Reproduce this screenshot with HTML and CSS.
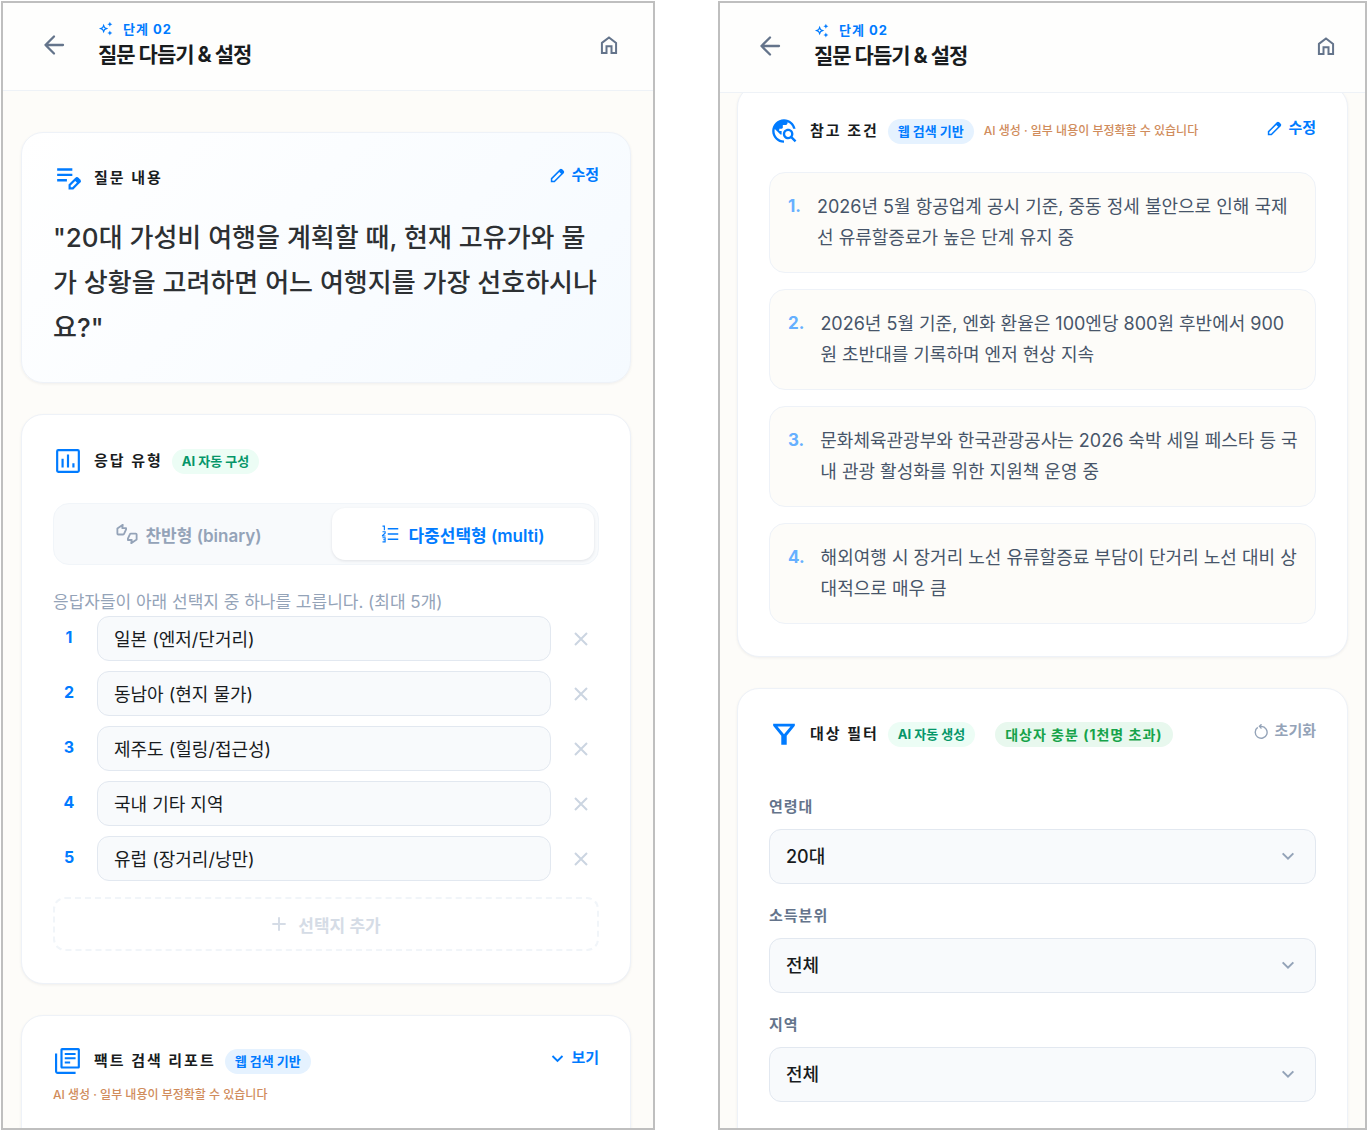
FILE: index.html
```html
<!DOCTYPE html>
<html lang="ko">
<head>
    <meta charset="UTF-8">
    <meta name="viewport" content="width=device-width, initial-scale=1.0">
    <title>질문 다듬기 &amp; 설정</title>
    <link rel="stylesheet" href="styles.css">
</head>
<body>
    <!-- Shared icons -->
    <svg class="sprite" aria-hidden="true">
        <symbol id="i-back" viewBox="0 0 24 24"><path d="M21 12H3.5M12 3.5 3.5 12l8.5 8.5" fill="none" stroke="currentColor" stroke-width="2.3" stroke-linecap="round" stroke-linejoin="round"/></symbol>
        <symbol id="i-home" viewBox="0 0 24 24"><path d="M3.5 9.5 12 3l8.5 6.5v12H15v-8H9v8H3.5z" fill="none" stroke="currentColor" stroke-width="2.4"/></symbol>
        <symbol id="i-spark" viewBox="0 0 24 24"><path fill-rule="evenodd" d="M9 4.500 11.200 9.800 16.500 12l-5.300 2.200L9 19.500l-2.200-5.300L1.500 12l5.300-2.200zM9 9.400l-.8 1.800-1.800.8 1.800.8.8 1.800.8-1.800 1.800-.8-1.800-.8zM19 1l1.200 2.800L23 5l-2.800 1.200L19 9l-1.200-2.800L15 5l2.800-1.200zM19 15l1.200 2.800L23 19l-2.800 1.200L19 23l-1.200-2.800L15 19l2.800-1.200z"/></symbol>
        <symbol id="i-note" viewBox="0 0 24 24"><path d="M2 3h14v2.200H2zM2 8h14v2.200H2zM2 13h9v2.200H2z"/><path d="M13.500 21.500v-3l6-6a1 1 0 0 1 1.500 0l1.500 1.500a1 1 0 0 1 0 1.500l-6 6z" fill="none" stroke="currentColor" stroke-width="2"/><path d="m17.500 13.500 2.500-2 4 4-2.500 2z"/></symbol>
        <symbol id="i-edit" viewBox="0 0 24 24"><path d="M2.500 21.500V17L16.500 3a1.500 1.500 0 0 1 2.100 0L21 5.400a1.500 1.500 0 0 1 0 2.100L7 21.500z" fill="none" stroke="currentColor" stroke-width="2.4"/><path d="m14 5.500 3-3h2l3 3v2l-3 3z"/></symbol>
        <symbol id="i-chart" viewBox="0 0 24 24"><path d="M6 10h2v8H6zM11 6h2v12h-2zM16 14h2v4h-2z"/><rect x="2" y="2" width="20" height="20" rx="1" fill="none" stroke="currentColor" stroke-width="2"/></symbol>
        <symbol id="i-thumbs" viewBox="0 0 24 24"><path d="M1.500 6v5.500a1 1 0 0 0 1 1h5.200c.6 0 1-.3 1.200-.8L11 7V5.500H6.800l.6-3.500L1.500 6zM22.500 18v-5.500a1 1 0 0 0-1-1h-5.200c-.6 0-1 .3-1.200.8L13 17v1.500h4.200l-.6 3.500 5.900-4z" fill="none" stroke="currentColor" stroke-width="2" stroke-linejoin="round"/></symbol>
        <symbol id="i-list" viewBox="0 0 24 24"><path d="M9 4h14v2H9zM9 11h14v2H9zM9 18h14v2H9z"/><path d="M2 1.500h2.500V7M2 9h3.500v2L2 14v.7h4M2 17h3.500v5.500H2M3 19.700h2.500" fill="none" stroke="currentColor" stroke-width="1.5"/></symbol>
        <symbol id="i-books" viewBox="0 0 24 24"><path d="M2 5H0v16.500C0 22.900 1.100 24 2.500 24H19v-2H2V5zm19.500-5h-15C5.700 0 5 .7 5 1.500v16c0 .8.700 1.500 1.500 1.500h15c.8 0 1.500-.7 1.500-1.500v-16C23 .7 22.300 0 21.500 0zM21 17H7V2h14v15zM9 8.500h10v1.900H9zm0 4h5v1.900H9zm0-8h10v1.900H9z"/></symbol>
        <symbol id="i-globe" viewBox="1 1 22 22"><path d="M19.300 16.900c.4-.7.7-1.500.7-2.400 0-2.500-2-4.500-4.500-4.500S11 12 11 14.500s2 4.500 4.500 4.500c.9 0 1.700-.3 2.400-.7l3.200 3.200 1.400-1.400-3.200-3.200zm-3.800.1c-1.400 0-2.500-1.100-2.500-2.500s1.100-2.500 2.500-2.500 2.500 1.100 2.500 2.500-1.100 2.500-2.500 2.500zM12 20v2C6.480 22 2 17.520 2 12S6.480 2 12 2c4.840 0 8.870 3.440 9.800 8h-2.070c-.64-2.460-2.400-4.470-4.730-5.410V5c0 1.100-.9 2-2 2h-2v2c0 .55-.45 1-1 1H8v2h2v3H9l-4.790-4.790C4.080 10.790 4 11.380 4 12c0 4.410 3.590 8 8 8z"/></symbol>
        <symbol id="i-filter" viewBox="0 0 24 24"><path fill-rule="evenodd" d="M2 2.500h20v1.800l-7.500 9.200V22h-5v-8.500L2 4.300zM6 5l6 7.300L18 5z"/></symbol>
        <symbol id="i-close" viewBox="0 0 24 24"><path d="m3 3 18 18M21 3 3 21" fill="none" stroke="currentColor" stroke-width="3"/></symbol>
        <symbol id="i-plus" viewBox="0 0 24 24"><path d="M12 2v20M2 12h20" fill="none" stroke="currentColor" stroke-width="3"/></symbol>
        <symbol id="i-down" viewBox="0 0 24 24"><path d="m4 8 8 8 8-8" fill="none" stroke="currentColor" stroke-width="3"/></symbol>
        <symbol id="i-reset" viewBox="0 0 24 24"><path d="M6 5.500A9.500 9.500 0 1 0 12 3.800H9M12 .5 8.700 3.800 12 7.200" fill="none" stroke="currentColor" stroke-width="2.2"/></symbol>
    </svg>

    <main class="screens">
        <!-- Screen 1: question and answer options -->
        <section class="phone">
            <header class="topbar">
                <button class="icon-btn" aria-label="뒤로"><svg class="icon icon-24"><use href="#i-back"/></svg></button>
                <div class="topbar-title">
                    <span class="step"><svg class="icon icon-15"><use href="#i-spark"/></svg>단계 02</span>
                    <h1>질문 다듬기 &amp; 설정</h1>
                </div>
                <button class="icon-btn" aria-label="홈"><svg class="icon icon-20"><use href="#i-home"/></svg></button>
            </header>

            <div class="content">
                <section class="card question-card">
                    <div class="card-head">
                        <h2><svg class="icon icon-26"><use href="#i-note"/></svg>질문 내용</h2>
                        <button class="link-btn"><svg class="icon icon-15"><use href="#i-edit"/></svg>수정</button>
                    </div>
                    <p class="question">"20대 가성비 여행을 계획할 때, 현재 고유가와 물가 상황을 고려하면 어느 여행지를 가장 선호하시나요?"</p>
                </section>

                <section class="card">
                    <div class="card-head type-head">
                        <h2><svg class="icon icon-26"><use href="#i-chart"/></svg>응답 유형</h2>
                        <span class="badge badge-mint">AI 자동 구성</span>
                    </div>
                    <div class="tabs">
                        <button class="tab"><svg class="icon icon-22"><use href="#i-thumbs"/></svg>찬반형 (binary)</button>
                        <button class="tab active"><svg class="icon icon-18"><use href="#i-list"/></svg>다중선택형 (multi)</button>
                    </div>
                    <p class="hint">응답자들이 아래 선택지 중 하나를 고릅니다. (최대 5개)</p>
                    <div class="options">
                        <div class="option">
                            <label for="opt1">1</label>
                            <input id="opt1" type="text" value="일본 (엔저/단거리)">
                            <button class="remove-btn" aria-label="삭제"><svg class="icon icon-16"><use href="#i-close"/></svg></button>
                        </div>
                        <div class="option">
                            <label for="opt2">2</label>
                            <input id="opt2" type="text" value="동남아 (현지 물가)">
                            <button class="remove-btn" aria-label="삭제"><svg class="icon icon-16"><use href="#i-close"/></svg></button>
                        </div>
                        <div class="option">
                            <label for="opt3">3</label>
                            <input id="opt3" type="text" value="제주도 (힐링/접근성)">
                            <button class="remove-btn" aria-label="삭제"><svg class="icon icon-16"><use href="#i-close"/></svg></button>
                        </div>
                        <div class="option">
                            <label for="opt4">4</label>
                            <input id="opt4" type="text" value="국내 기타 지역">
                            <button class="remove-btn" aria-label="삭제"><svg class="icon icon-16"><use href="#i-close"/></svg></button>
                        </div>
                        <div class="option">
                            <label for="opt5">5</label>
                            <input id="opt5" type="text" value="유럽 (장거리/낭만)">
                            <button class="remove-btn" aria-label="삭제"><svg class="icon icon-16"><use href="#i-close"/></svg></button>
                        </div>
                    </div>
                    <button class="add-btn"><svg class="icon icon-16"><use href="#i-plus"/></svg>선택지 추가</button>
                </section>

                <section class="card report-card">
                    <div class="card-head">
                        <h2><svg class="icon icon-26"><use href="#i-books"/></svg>팩트 검색 리포트</h2>
                        <span class="badge badge-blue">웹 검색 기반</span>
                        <button class="link-btn"><svg class="icon icon-15"><use href="#i-down"/></svg>보기</button>
                    </div>
                    <p class="notice">AI 생성 · 일부 내용이 부정확할 수 있습니다</p>
                </section>
            </div>
        </section>

        <!-- Screen 2: conditions and target filter -->
        <section class="phone phone-scrolled">
            <header class="topbar">
                <button class="icon-btn" aria-label="뒤로"><svg class="icon icon-24"><use href="#i-back"/></svg></button>
                <div class="topbar-title">
                    <span class="step"><svg class="icon icon-15"><use href="#i-spark"/></svg>단계 02</span>
                    <h1>질문 다듬기 &amp; 설정</h1>
                </div>
                <button class="icon-btn" aria-label="홈"><svg class="icon icon-20"><use href="#i-home"/></svg></button>
            </header>

            <div class="content">
                <section class="card">
                    <div class="card-head conditions-head">
                        <h2><svg class="icon icon-26"><use href="#i-globe"/></svg>참고 조건</h2>
                        <span class="badge badge-blue">웹 검색 기반</span>
                        <span class="notice">AI 생성 · 일부 내용이 부정확할 수 있습니다</span>
                        <button class="link-btn"><svg class="icon icon-15"><use href="#i-edit"/></svg>수정</button>
                    </div>
                    <ol class="conditions">
                        <li><span class="num">1.</span><p>2026년 5월 항공업계 공시 기준, 중동 정세 불안으로 인해 국제선 유류할증료가 높은 단계 유지 중</p></li>
                        <li><span class="num">2.</span><p>2026년 5월 기준, 엔화 환율은 100엔당 800원 후반에서 900원 초반대를 기록하며 엔저 현상 지속</p></li>
                        <li><span class="num">3.</span><p>문화체육관광부와 한국관광공사는 2026 숙박 세일 페스타 등 국내 관광 활성화를 위한 지원책 운영 중</p></li>
                        <li><span class="num">4.</span><p>해외여행 시 장거리 노선 유류할증료 부담이 단거리 노선 대비 상대적으로 매우 큼</p></li>
                    </ol>
                </section>

                <section class="card filter-card">
                    <div class="card-head">
                        <h2><svg class="icon icon-26"><use href="#i-filter"/></svg>대상 필터</h2>
                        <span class="badge badge-mint">AI 자동 생성</span>
                        <span class="badge badge-green">대상자 충분 (1천명 초과)</span>
                        <button class="link-btn muted"><svg class="icon icon-15"><use href="#i-reset"/></svg>초기화</button>
                    </div>
                    <div class="fields">
                        <div class="field">
                            <label for="age">연령대</label>
                            <div class="select">
                                <select id="age"><option>20대</option></select>
                                <svg class="icon icon-16"><use href="#i-down"/></svg>
                            </div>
                        </div>
                        <div class="field">
                            <label for="income">소득분위</label>
                            <div class="select">
                                <select id="income"><option>전체</option></select>
                                <svg class="icon icon-16"><use href="#i-down"/></svg>
                            </div>
                        </div>
                        <div class="field">
                            <label for="region">지역</label>
                            <div class="select">
                                <select id="region"><option>전체</option></select>
                                <svg class="icon icon-16"><use href="#i-down"/></svg>
                            </div>
                        </div>
                    </div>
                </section>
            </div>
        </section>
    </main>
</body>
</html>
```
FILE: styles.css
```css
/* General Styles */
* {
    box-sizing: border-box;
}

body {
    margin: 0;
    background-color: white;
    color: #191c1e;
    font-family: Inter, "Noto Sans CJK KR", sans-serif;
    font-size: 17px;
}

h1, h2, p, ol {
    margin: 0;
    padding: 0;
}

button, input, select {
    font-family: inherit;
    color: inherit;
}

button {
    display: flex;
    align-items: center;
    justify-content: center;
    border: none;
    background: none;
    padding: 0;
    cursor: pointer;
}

.sprite {
    display: none;
}

.icon {
    flex: none;
    fill: currentColor;
}

.icon-15 { width: 15px; height: 15px; }
.icon-16 { width: 16px; height: 16px; }
.icon-18 { width: 18px; height: 18px; }
.icon-20 { width: 20px; height: 20px; }
.icon-22 { width: 22px; height: 22px; }
.icon-24 { width: 24px; height: 24px; }
.icon-26 { width: 26px; height: 26px; }

/* Screens */
.screens {
    display: grid;
    grid-template-columns: 654fr 649fr;
    gap: 63px;
    height: 100vh;
    padding: 1px 0 1px 1px;
}

.phone {
    min-width: 0;
    border: 2px solid #bfbfbf;
    background-color: #fdfcf9;
    overflow: hidden;
}

/* Top bar */
.topbar {
    position: relative;
    z-index: 1;
    display: flex;
    align-items: center;
    height: 88px;
    padding: 0 34px 4px 39px;
    border-bottom: 1px solid #eef2f7;
    background-color: #fefefd;
}

.icon-btn {
    color: #64748b;
}

.topbar-title {
    flex: 1;
    margin-left: 32px;
}

.step {
    display: flex;
    align-items: center;
    gap: 10px;
    color: #007bff;
    font-size: 13px;
    font-weight: 700;
    line-height: 20px;
    letter-spacing: 1px;
}

h1 {
    font-size: 21px;
    font-weight: 700;
    line-height: 32px;
    letter-spacing: -1px;
}

/* Cards */
.content {
    display: flex;
    flex-direction: column;
    gap: 31px;
    padding: 41px 22px 0 18px;
}

.card {
    padding: 32px 31px;
    border: 1px solid #eef2f8;
    border-radius: 22px;
    background-color: white;
    box-shadow: 0 1px 3px rgba(15, 23, 42, 0.06);
}

.question-card {
    background: linear-gradient(135deg, white, #f5faff);
}

.card-head {
    display: flex;
    align-items: center;
    height: 26px;
}

h2 {
    display: flex;
    align-items: flex-start;
    gap: 13px;
    margin-left: 2px;
    font-size: 15px;
    font-weight: 700;
    line-height: 26px;
    letter-spacing: 2px;
}

h2 .icon {
    color: #007bff;
}

.badge {
    margin-left: 9px;
    padding: 0 10px;
    border-radius: 13px;
    font-size: 13px;
    font-weight: 700;
    line-height: 25px;
    white-space: nowrap;
}

.badge-mint {
    background-color: #ecfdf5;
    color: #059669;
}

.badge-blue {
    background-color: #e5f2ff;
    color: #007bff;
}

.badge-green {
    margin-left: 20px;
    background-color: #e8f8ee;
    color: #16a34a;
    font-size: 14px;
    letter-spacing: 1px;
}

.link-btn {
    align-self: flex-start;
    gap: 6px;
    margin-left: auto;
    color: #007bff;
    font-size: 15px;
    font-weight: 700;
    line-height: 20px;
}

.link-btn.muted {
    color: #94a3b8;
}

.notice {
    color: #d08c5c;
    font-size: 12px;
    font-weight: 500;
    line-height: 18px;
}

/* Question */
.question {
    margin-top: 24px;
    color: #2d3033;
    font-size: 26px;
    font-weight: 500;
    line-height: 45px;
}

/* Answer type */
.type-head {
    height: 28px;
}

.tabs {
    display: grid;
    grid-template-columns: 1fr 1fr;
    gap: 12px;
    margin-top: 28px;
    height: 62px;
    padding: 4px;
    border: 1px solid #f1f5f9;
    border-radius: 16px;
    background-color: #f8fafc;
}

.tab {
    gap: 7px;
    border-radius: 13px;
    color: #94a3b8;
    font-size: 17px;
    font-weight: 600;
}

.tab.active {
    gap: 9px;
    background-color: white;
    color: #007bff;
    box-shadow: 0 1px 3px rgba(15, 23, 42, 0.1);
}

.hint {
    margin-top: 24px;
    color: #94a3b8;
    font-size: 17px;
    line-height: 27px;
}

.options {
    display: grid;
    gap: 10px;
}

.option {
    display: flex;
    gap: 12px;
}

.option label {
    width: 32px;
    color: #007bff;
    font-size: 16px;
    font-weight: 700;
    line-height: 43px;
    text-align: center;
}

.option input {
    flex: 1;
    min-width: 0;
    height: 45px;
    padding: 0 16px 2px;
    border: 1px solid #e2e8f0;
    border-radius: 12px;
    background-color: #f8fafc;
    font-size: 18px;
}

.remove-btn {
    width: 36px;
    color: #cbd5e1;
}

.add-btn {
    gap: 11px;
    width: 100%;
    height: 54px;
    margin-top: 16px;
    border: 2px dashed #f1f5f9;
    border-radius: 12px;
    color: #d5dce6;
    font-size: 17px;
    font-weight: 600;
}

/* Fact report */
.report-card {
    min-height: 160px;
}

.report-card .notice {
    margin-top: 12px;
}

/* Scrolled screen */
.phone-scrolled .topbar {
    height: 90px;
    padding: 0 29px 3px 38px;
}

.phone-scrolled .content {
    margin-top: -8px;
    padding: 0 17px;
}

.conditions-head .notice {
    margin-left: 10px;
}

.conditions {
    display: grid;
    gap: 16px;
    margin-top: 28px;
    list-style: none;
}

.conditions li {
    display: flex;
    gap: 16px;
    padding: 18px 17px 19px 18px;
    border: 1px solid #eef2f8;
    border-radius: 16px;
    background-color: #fdfcf9;
    color: #475569;
    font-size: 18px;
    line-height: 31px;
}

.num {
    color: #66b0ff;
    font-size: 17px;
    font-weight: 700;
}

/* Target filter */
.filter-card {
    min-height: 480px;
}

.fields {
    display: grid;
    gap: 22px;
    margin-top: 50px;
}

.field label {
    display: block;
    margin-bottom: 12px;
    color: #64748b;
    font-size: 15px;
    font-weight: 700;
    line-height: 20px;
    letter-spacing: 1px;
}

.select {
    position: relative;
}

.select select {
    display: block;
    width: 100%;
    height: 55px;
    padding: 0 16px;
    border: 1px solid #e2e8f0;
    border-radius: 12px;
    background-color: #f8fafc;
    font-size: 18px;
    font-weight: 500;
    appearance: none;
}

.select .icon {
    position: absolute;
    top: 19px;
    right: 20px;
    color: #94a3b8;
    pointer-events: none;
}
```
